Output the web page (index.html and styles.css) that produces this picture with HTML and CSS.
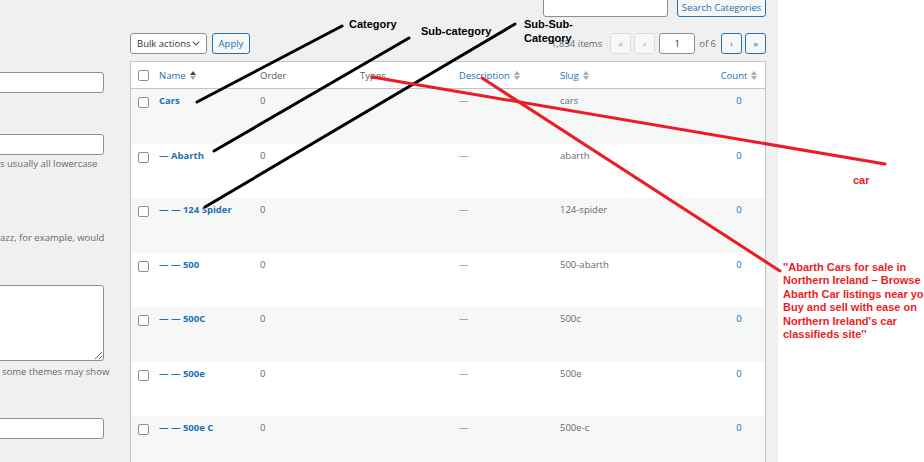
FILE: index.html
```html
<!DOCTYPE html>
<html lang="en">
<head>
    <meta charset="UTF-8">
    <meta name="viewport" content="width=device-width, initial-scale=1.0">
    <title>Categories</title>
    <link rel="stylesheet" href="styles.css">
</head>
<body>
    <div class="screen">
        <div class="form-col">
            <input type="text" class="field">
            <input type="text" class="field field-slug">
            <p class="hint">s usually all lowercase</p>
            <p class="hint hint-parent">azz, for example, would</p>
            <textarea class="field field-area"></textarea>
            <p class="hint hint-desc">some themes may show</p>
            <input type="text" class="field field-last">
        </div>

        <div class="list-col">
            <div class="search-box">
                <input type="text" class="search-input">
                <button class="btn search-btn">Search Categories</button>
            </div>

            <div class="tablenav">
                <div class="select"><span>Bulk actions</span>
                    <svg class="chev" width="8" height="5" viewBox="0 0 8 5"><path d="M0.7 0.7 L4 4 L7.3 0.7" fill="none" stroke="#50575e" stroke-width="1.1"/></svg>
                </div>
                <button class="btn apply">Apply</button>

                <div class="pages">
                    <span class="items">1,854 items</span>
                    <span class="pg pg-off">&laquo;</span>
                    <span class="pg pg-off">&lsaquo;</span>
                    <span class="pg-input">1</span>
                    <span class="of">of 6</span>
                    <span class="pg">&rsaquo;</span>
                    <span class="pg">&raquo;</span>
                </div>
            </div>

            <table class="terms">
                <thead>
                    <tr>
                        <th class="col-cb"><span class="cb"></span></th>
                        <th class="col-name"><span class="link">Name</span><span class="sort sort-asc"></span></th>
                        <th class="col-order">Order</th>
                        <th class="col-types">Types</th>
                        <th class="col-desc"><span class="link">Description</span><span class="sort"></span></th>
                        <th class="col-slug"><span class="link">Slug</span><span class="sort"></span></th>
                        <th class="col-count"><span class="link">Count</span><span class="sort"></span></th>
                    </tr>
                </thead>
                <tbody>
                    <tr>
                        <td><span class="cb"></span></td>
                        <td class="row-title">Cars</td>
                        <td>0</td>
                        <td></td>
                        <td>&mdash;</td>
                        <td>cars</td>
                        <td class="num">0</td>
                    </tr>
                    <tr>
                        <td><span class="cb"></span></td>
                        <td class="row-title">&mdash; Abarth</td>
                        <td>0</td>
                        <td></td>
                        <td>&mdash;</td>
                        <td>abarth</td>
                        <td class="num">0</td>
                    </tr>
                    <tr>
                        <td><span class="cb"></span></td>
                        <td class="row-title">&mdash; &mdash; 124 Spider</td>
                        <td>0</td>
                        <td></td>
                        <td>&mdash;</td>
                        <td>124-spider</td>
                        <td class="num">0</td>
                    </tr>
                    <tr>
                        <td><span class="cb"></span></td>
                        <td class="row-title">&mdash; &mdash; 500</td>
                        <td>0</td>
                        <td></td>
                        <td>&mdash;</td>
                        <td>500-abarth</td>
                        <td class="num">0</td>
                    </tr>
                    <tr>
                        <td><span class="cb"></span></td>
                        <td class="row-title">&mdash; &mdash; 500C</td>
                        <td>0</td>
                        <td></td>
                        <td>&mdash;</td>
                        <td>500c</td>
                        <td class="num">0</td>
                    </tr>
                    <tr>
                        <td><span class="cb"></span></td>
                        <td class="row-title">&mdash; &mdash; 500e</td>
                        <td>0</td>
                        <td></td>
                        <td>&mdash;</td>
                        <td>500e</td>
                        <td class="num">0</td>
                    </tr>
                    <tr>
                        <td><span class="cb"></span></td>
                        <td class="row-title">&mdash; &mdash; 500e C</td>
                        <td>0</td>
                        <td></td>
                        <td>&mdash;</td>
                        <td>500e-c</td>
                        <td class="num">0</td>
                    </tr>
                </tbody>
            </table>
        </div>
    </div>

    <!-- annotations drawn over the screenshot -->
    <svg class="marks" width="924" height="462" viewBox="0 0 924 462">
        <g stroke="#000" stroke-width="3" stroke-linecap="round">
            <line x1="197" y1="102" x2="342" y2="26"/>
            <line x1="214" y1="151" x2="409" y2="38"/>
            <line x1="205" y1="207" x2="515" y2="24"/>
        </g>
        <g stroke="#ed1c24" stroke-width="3" stroke-linecap="round">
            <line x1="372" y1="77" x2="885" y2="164"/>
            <line x1="482" y1="78" x2="780" y2="271"/>
        </g>
    </svg>

    <div class="note note-cat">Category</div>
    <div class="note note-sub">Sub-category</div>
    <div class="note note-subsub">Sub-Sub-<br>Category</div>
    <div class="note note-red note-car">car</div>
    <div class="note note-red note-quote">''Abarth Cars for sale in<br>Northern Ireland &ndash; Browse<br>Abarth Car listings near you.<br>Buy and sell with ease on<br>Northern Ireland's car<br>classifieds site''</div>
</body>
</html>
```

FILE: styles.css
```css
body {
    margin: 0;
    width: 924px;
    height: 462px;
    overflow: hidden;
    position: relative;
    background: #fff;
    font-family: "Open Sans", "Noto Sans", sans-serif;
    font-size: 9.5px;
    color: #50575e;
}

.screen {
    width: 778px;
    height: 462px;
    background: #f0f0f1;
    display: flex;
    overflow: hidden;
}

/* left form, cropped at the window edge */
.form-col {
    flex: none;
    width: 104px;
    padding-top: 72px;
}

.field {
    display: block;
    box-sizing: border-box;
    width: 110px;
    height: 21px;
    margin: 0 0 0 -6px;
    padding: 0;
    border: 1px solid #8c8f94;
    border-radius: 3px;
    background: #fff;
}

.field-slug {
    margin-top: 41px;
}

.field-area {
    margin-top: 41px;
    height: 76px;
    resize: vertical;
}

.field-last {
    margin-top: 40px;
}

.hint {
    margin: 3px 0 0;
    line-height: 12px;
    white-space: nowrap;
    color: #646970;
}

.hint-parent {
    margin-top: 62px;
}

.hint-desc {
    margin-top: 5px;
    padding-left: 2px;
}

/* list table side */
.list-col {
    flex: none;
    width: 636px;
    margin-left: 26px;
    margin-top: -3px;
}

.search-box {
    display: flex;
    justify-content: flex-end;
    gap: 9px;
    height: 20px;
}

.search-input {
    box-sizing: border-box;
    width: 125px;
    height: 20px;
    margin: 0;
    border: 1px solid #8c8f94;
    border-radius: 3px;
    background: #fff;
}

.btn {
    box-sizing: border-box;
    height: 21px;
    margin: 0;
    padding: 0;
    border: 1px solid #2271b1;
    border-radius: 3px;
    background: #f6f7f7;
    color: #2271b1;
    font-family: inherit;
    font-size: 9.5px;
}

.search-btn {
    width: 89px;
    height: 20px;
}

.tablenav {
    display: flex;
    align-items: center;
    height: 21px;
    margin-top: 16px;
}

.select {
    box-sizing: border-box;
    width: 77px;
    height: 21px;
    display: flex;
    align-items: center;
    justify-content: space-between;
    padding: 0 6px 0 6px;
    border: 1px solid #8c8f94;
    border-radius: 3px;
    background: #fff;
    color: #2c3338;
    font-size: 9.5px;
    white-space: nowrap;
}

.apply {
    width: 38px;
    margin-left: 5px;
}

.pages {
    margin-left: auto;
    display: flex;
    align-items: center;
    gap: 3px;
}

.items {
    margin-right: 5px;
    color: #646970;
}

.pg,
.pg-input {
    box-sizing: border-box;
    height: 21px;
    display: flex;
    align-items: center;
    justify-content: center;
    border-radius: 3px;
    font-size: 9.5px;
}

.pg {
    width: 21px;
    border: 1px solid #2271b1;
    background: #f6f7f7;
    color: #2271b1;
}

.pg-off {
    border-color: #dcdcde;
    color: #a7aaad;
}

.pg-input {
    width: 36px;
    margin-left: 1px;
    border: 1px solid #8c8f94;
    background: #fff;
    color: #2c3338;
}

.of {
    margin: 0 2px 0 1px;
    color: #646970;
}

.terms {
    width: 636px;
    margin-top: 7px;
    table-layout: fixed;
    border: 1px solid #c3c4c7;
    border-spacing: 0;
    background: #fff;
    font-size: 9.5px;
}

.terms th {
    box-sizing: border-box;
    height: 27px;
    padding: 0 7px;
    border-bottom: 1px solid #c3c4c7;
    text-align: left;
    font-weight: 400;
    color: #50575e;
    vertical-align: middle;
    white-space: nowrap;
}

.col-cb { width: 21px; }
.col-name { width: 101px; }
.col-order { width: 100px; }
.col-types { width: 99px; }
.col-desc { width: 101px; }
.col-slug { width: 160px; }
.col-count { width: 52px; }

.terms th.col-cb,
.terms td:first-child {
    padding-left: 7px;
    padding-right: 0;
}

.terms .col-count {
    text-align: center;
    padding: 0;
}

.terms td {
    box-sizing: border-box;
    height: 54.5px;
    padding: 6px 7px 0;
    vertical-align: top;
    line-height: 12px;
    white-space: nowrap;
    color: #646970;
}

.terms tbody tr:nth-child(odd) td {
    background: #f6f7f7;
}

.cb {
    display: block;
    box-sizing: border-box;
    width: 11px;
    height: 11px;
    border: 1px solid #8c8f94;
    border-radius: 2px;
    background: #fff;
}

.terms td .cb {
    margin-top: 2px;
}

.link {
    color: #2271b1;
}

.row-title {
    color: #2271b1 !important;
    font-weight: 700;
}

.terms td.num {
    text-align: center;
    padding: 6px 0 0;
    color: #2271b1;
}

.sort {
    display: inline-block;
    width: 6px;
    height: 9px;
    margin-left: 4px;
    vertical-align: -1px;
    position: relative;
}

.sort::before,
.sort::after {
    content: "";
    position: absolute;
    left: 0;
    border-left: 3px solid transparent;
    border-right: 3px solid transparent;
}

.sort::before {
    top: 0;
    border-bottom: 4px solid #a7aaad;
}

.sort::after {
    bottom: 0;
    border-top: 4px solid #a7aaad;
}

.sort-asc::before {
    border-bottom-color: #3c434a;
}

/* annotation layer */
.marks {
    position: absolute;
    top: 0;
    left: 0;
    pointer-events: none;
}

.note {
    position: absolute;
    font-family: "Liberation Sans", Arial, sans-serif;
    font-weight: 700;
    font-size: 11px;
    line-height: 13px;
    color: #000;
    white-space: nowrap;
}

.note-cat { left: 349px; top: 18px; }
.note-sub { left: 421px; top: 25px; }
.note-subsub { left: 524px; top: 17px; line-height: 14px; }

.note-red {
    color: #ed1c24;
}

.note-car { left: 853px; top: 174px; }
.note-quote { left: 783px; top: 261px; line-height: 13.4px; }
```
